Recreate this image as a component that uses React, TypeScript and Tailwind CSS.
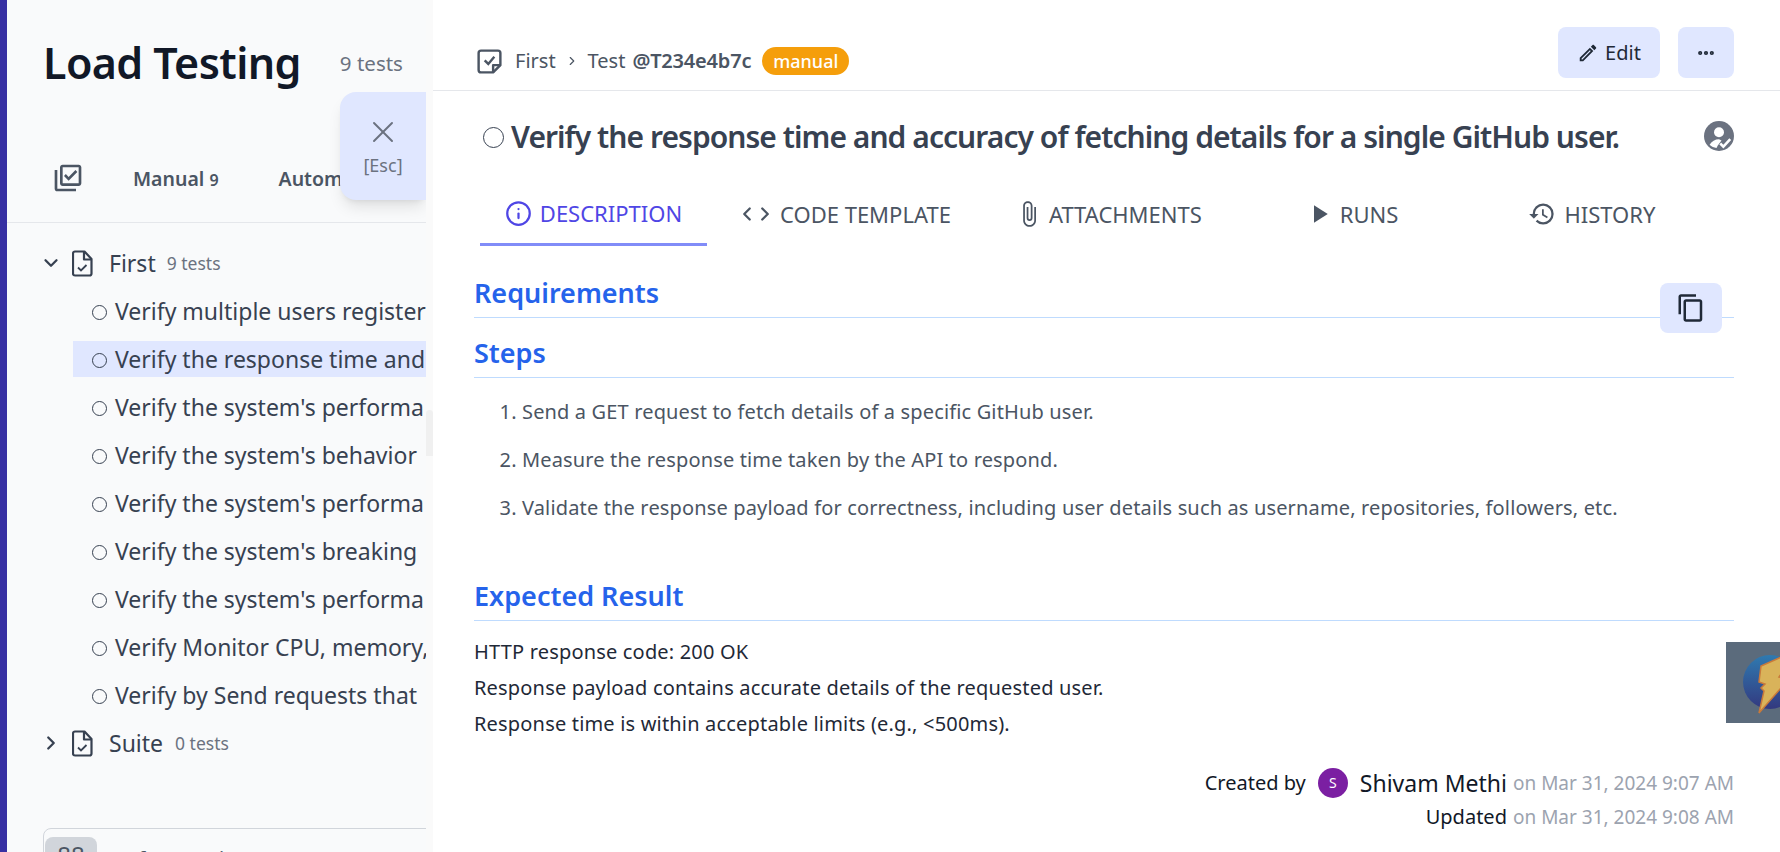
import React from 'react';
import { ChevronDown, ChevronLeft, ChevronRight, Info, MoreHorizontal, X } from 'lucide-react';
import { MdAttachFile, MdContentCopy, MdHistory, MdOutlineEdit, MdOutlineLibraryAddCheck, MdPlayArrow } from 'react-icons/md';

const tests = [
  "Verify multiple users register",
  "Verify the response time and",
  "Verify the system's performa",
  "Verify the system's behavior",
  "Verify the system's performa",
  "Verify the system's breaking",
  "Verify the system's performa",
  "Verify Monitor CPU, memory,",
  "Verify by Send requests that",
];

const steps = [
  "Send a GET request to fetch details of a specific GitHub user.",
  "Measure the response time taken by the API to respond.",
  "Validate the response payload for correctness, including user details such as username, repositories, followers, etc.",
];

const SuiteIcon = () => (
  <svg width="21" height="27" viewBox="0 0 21 27" fill="none" stroke="#374151" strokeWidth="2.2" className="shrink-0">
    <path d="M3 1.500h9.500l7 7.500v14.500a2 2 0 0 1-2 2H3a2 2 0 0 1-2-2v-20a2 2 0 0 1 2-2z" strokeLinejoin="round" />
    <path d="M12 2v7.500h7" strokeLinejoin="round" />
    <path d="M6 17.500l3 3 5.500-5.500" strokeWidth="1.8" />
  </svg>
);

const Circle = ({ size = 15 }: { size?: number }) => (
  <span className="mt-[3px] inline-block shrink-0 rounded-full border-[1.5px] border-[#374151]" style={{ width: size, height: size }} />
);

const Tab = ({ icon, label, active, className }: { icon: React.ReactNode; label: string; active?: boolean; className: string }) => (
  <div className={`flex h-[60px] items-center gap-[8px] text-[22px] ${active ? 'justify-center border-b-[3px] border-[#818cf8] pb-[2px] text-[#4f46e5]' : 'pb-[4px] text-[#4b5563]'} ${className}`}>
    {icon}
    <span>{label}</span>
  </div>
);

const Heading = ({ children }: { children: React.ReactNode }) => (
  <h2 className="border-b border-[#bfdbfe] pb-[6px] text-[27px] leading-[37px] font-semibold text-[#2563eb]">{children}</h2>
);

export default function App() {
  return (
    <div className="flex h-[852px] w-[1780px] overflow-hidden bg-white font-['Noto_Sans',sans-serif]">
      <div className="w-[7px] shrink-0 bg-[#3730a3]" />

      {/* test list */}
      <aside className="relative h-full w-[419px] shrink-0 overflow-hidden bg-[#f9fafb]">
        <div className="flex items-center pt-[34px] pl-[36px]">
          <h1 className="text-[43px] leading-[58px] font-semibold tracking-[-0.6px] whitespace-nowrap text-[#111827]">Load Testing</h1>
          <span className="ml-[39px] text-[20.500px] whitespace-nowrap text-[#6b7280]">9 tests</span>
        </div>
        <div className="mt-[71px] flex h-[60px] items-start border-b border-[#e5e7eb] pl-[45px]">
          <MdOutlineLibraryAddCheck size={32} className="-mt-[1px] text-[#4b5563]" />
          <span className="mt-[1px] ml-[49px] text-[19.500px] font-semibold whitespace-nowrap text-[#4b5563]">Manual <span className="text-[16px]">9</span></span>
          <span className="mt-[1px] ml-[60px] text-[19.500px] font-semibold whitespace-nowrap text-[#4b5563]">Automated</span>
        </div>

        <div className="pt-[16px]">
          <div className="flex h-[48px] items-center pl-[33px] text-[#374151]">
            <ChevronDown size={22} strokeWidth={2.5} />
            <span className="ml-[10px] flex"><SuiteIcon /></span>
            <span className="ml-[16px] text-[23px]">First</span>
            <span className="ml-[11px] text-[17.500px] text-[#6b7280]">9 tests</span>
          </div>
          {tests.map((t, i) => (
            <div key={i} className="ml-[66px] flex h-[48px] items-center">
              <span className={`flex h-[36px] w-full items-center gap-[7px] pl-[19px] text-[23px] whitespace-nowrap text-[#374151] ${i === 1 ? 'bg-[#e0e7ff]' : ''}`}>
                <Circle />
                <span className="ml-[1px]">{t}</span>
              </span>
            </div>
          ))}
          <div className="flex h-[48px] items-center pl-[33px] text-[#374151]">
            <ChevronRight size={22} strokeWidth={2.5} />
            <span className="ml-[10px] flex"><SuiteIcon /></span>
            <span className="ml-[16px] text-[23px]">Suite</span>
            <span className="ml-[12px] text-[17.500px] text-[#6b7280]">0 tests</span>
          </div>
        </div>

        <div className="absolute top-[828px] left-[36px] flex h-[60px] w-[500px] gap-[22px] rounded-t-lg border border-[#d1d5db] pt-[8px] pl-[1px] text-[20px] text-[#4b5563]">
          <span className="h-[32px] w-[52px] rounded-lg bg-[#d1d5db] pt-[2px] text-center text-[24px] leading-[32px]">88</span>
          <span className="pt-[7px]">refs commit</span>
        </div>

        {/* close overlay */}
        <div className="absolute top-[92px] right-0 flex h-[108px] w-[86px] flex-col items-center justify-center rounded-l-2xl bg-[#e0e7ff] text-[#6b7280] shadow-lg">
          <X size={36} strokeWidth={1.300} />
          <span className="pt-[1px] text-[18px] leading-[28px]">[Esc]</span>
        </div>
      </aside>

      <div className="w-[7px] shrink-0 bg-[#fafafa] pt-[410px]">
        <div className="h-[46px] rounded-t bg-[#f0f0f0]" />
      </div>

      {/* test details */}
      <main className="relative min-w-0 flex-1">
        <header className="flex h-[91px] items-center border-b border-[#e5e7eb] pr-[46px] pl-[42px]">
          <span className="mt-[32px] flex items-center">
            <svg width="29" height="29" viewBox="0 0 24 24" fill="none" stroke="#4b5563" strokeWidth="2">
              <path d="M5 3h14a2 2 0 0 1 2 2v10l-6 6H5a2 2 0 0 1-2-2V5a2 2 0 0 1 2-2z" strokeLinejoin="round" />
              <path d="M15 21v-6h6" strokeLinejoin="round" />
              <path d="M8 11l3 3 5-6" />
            </svg>
            <span className="ml-[11px] text-[20px] text-[#4b5563]">First</span>
            <ChevronRight size={14} className="mx-[9px] text-[#4b5563]" />
            <span className="text-[20px] text-[#4b5563]">Test</span>
            <span className="ml-[7px] text-[20px] font-semibold tracking-[-0.2px] text-[#4b5563]">@T234e4b7c</span>
            <span className="ml-[11px] rounded-full bg-[#f59e0b] px-[11px] text-[18px] leading-[28px] font-medium text-white">manual</span>
          </span>
          <div className="ml-auto flex gap-[18px] self-start pt-[27px]">
            <button className="flex h-[51px] w-[102px] items-center justify-center gap-[6px] rounded-lg bg-[#e0e7ff] text-[20px] text-[#1f2937]">
              <MdOutlineEdit size={22} />
              Edit
            </button>
            <button className="flex h-[51px] w-[56px] items-center justify-center rounded-lg bg-[#e0e7ff] text-[#1f2937]">
              <MoreHorizontal size={20} strokeWidth={3} />
            </button>
          </div>
        </header>

        <div className="flex h-[90px] items-center pr-[46px] pl-[50px]">
          <Circle size={21} />
          <h2 className="ml-[7px] text-[30px] font-semibold tracking-[-0.95px] whitespace-nowrap text-[#374151]">Verify the response time and accuracy of fetching details for a single GitHub user.</h2>
          <svg width="30" height="30" viewBox="0 0 24 24" className="ml-auto" fill="#6b7280">
            <circle cx="12" cy="12" r="12" />
            <circle cx="12" cy="9" r="4" fill="#fff" />
            <path d="M4.500 19c1.500-3 4.500-4.500 7.500-4.500l2 1-3 4-1 2c-2-.2-4-1-5.500-2.500z" fill="#fff" />
            <path d="M13 18l2.500 2.500L21 14.500" fill="none" stroke="#fff" strokeWidth="2" />
          </svg>
        </div>

        <nav className="mt-[5px] ml-[47px] flex">
          <Tab className="w-[227px]" active label="DESCRIPTION" icon={<Info size={27} strokeWidth={2} />} />
          <Tab
            className="ml-[33px]"
            label="CODE TEMPLATE"
            icon={
              <span className="flex w-[32px] justify-center gap-[4px]">
                <ChevronLeft size={22} strokeWidth={2.5} className="-mx-[4px]" />
                <ChevronRight size={22} strokeWidth={2.5} className="-mx-[4px]" />
              </span>
            }
          />
          <Tab className="ml-[66px]" label="ATTACHMENTS" icon={<MdAttachFile size={28} className="-mx-[2px]" />} />
          <Tab className="ml-[102px]" label="RUNS" icon={<MdPlayArrow size={30} className="-mr-[2px]" />} />
          <Tab className="ml-[130px]" label="HISTORY" icon={<MdHistory size={28} />} />
        </nav>

        <section className="pt-[28px] pr-[46px] pl-[41px]">
          <Heading>Requirements</Heading>
          <div className="h-[16px]" />
          <Heading>Steps</Heading>
          <ol className="mt-[20px] ml-[24px] list-decimal pl-[24px] text-[20px] tracking-[0.15px] text-[#4b5563]">
            {steps.map((s) => (
              <li key={s} className="mb-[20px] leading-[28px]">{s}</li>
            ))}
          </ol>
          <div className="h-[35px]" />
          <Heading>Expected Result</Heading>
          <div className="mt-[13px] text-[20px] leading-[36px] tracking-[0.18px] text-[#1f2937]">
            <p>HTTP response code: 200 OK</p>
            <p>Response payload contains accurate details of the requested user.</p>
            <p>Response time is within acceptable limits (e.g., &lt;500ms).</p>
          </div>
          <div className="mt-[24px] flex flex-col items-end text-[20px] leading-[34px]">
            <div className="flex items-center">
              <span className="text-[#111827]">Created by</span>
              <span className="mx-[12px] flex h-[30px] w-[30px] items-center justify-center rounded-full bg-[#7b1fa2] text-[14px] text-white">S</span>
              <span className="text-[23px] text-[#111827]">Shivam Methi</span>
              <span className="ml-[6px] text-[19px] text-[#9ca3af]">on Mar 31, 2024 9:07 AM</span>
            </div>
            <div className="flex items-center">
              <span className="text-[#111827]">Updated</span>
              <span className="ml-[6px] text-[19px] text-[#9ca3af]">on Mar 31, 2024 9:08 AM</span>
            </div>
          </div>
        </section>

        {/* floating */}
        <button className="absolute top-[283px] right-[58px] flex h-[50px] w-[62px] items-center justify-center rounded-lg bg-[#e0e7ff] text-[#1f2937]">
          <MdContentCopy size={30} />
        </button>
        <div className="absolute top-[642px] right-0 h-[81px] w-[54px] overflow-hidden bg-[#5b6b7c]">
          <svg width="80" height="81" viewBox="0 0 80 81">
            <defs>
              <linearGradient id="orb" x1="0" y1="0" x2="0" y2="1">
                <stop offset="0" stopColor="#2f7ab0" />
                <stop offset="1" stopColor="#33397f" />
              </linearGradient>
            </defs>
            <circle cx="44" cy="40" r="27" fill="url(#orb)" />
            <path d="M62 12L35 24l-2 16 6 2-4 4 3 3-5 22 30-34-10-2 8-12z" fill="#d9b35a" stroke="#c97a3a" strokeWidth="1.500" />
          </svg>
        </div>
      </main>
    </div>
  );
}
